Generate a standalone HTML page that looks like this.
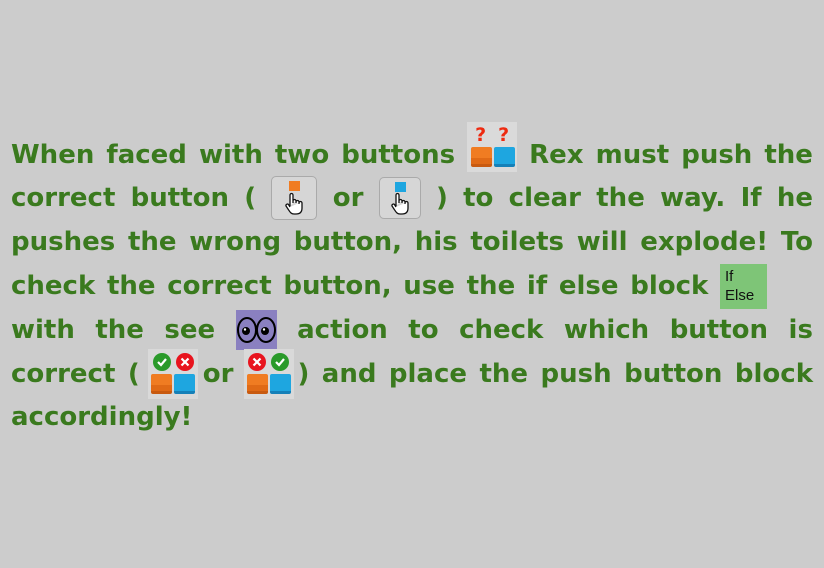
<!DOCTYPE html>
<html><head><meta charset="utf-8">
<style>
html,body{margin:0;padding:0;}
body{width:824px;height:568px;background:#cccccc;position:relative;overflow:hidden;
font-family:"DejaVu Sans","Liberation Sans",sans-serif;font-weight:bold;font-size:26px;color:#3a7a1e;}
.l{position:absolute;left:11px;width:802px;height:44px;display:flex;align-items:center;justify-content:space-between;white-space:nowrap;}
.l.last{justify-content:flex-start;}
.g{display:flex;align-items:center;}
.ic{display:inline-block;position:relative;flex:none;}
.sq{position:absolute;width:21px;height:20px;border-radius:2px;}
.o{background:#f07c22;border-bottom:3px solid #c85a10;box-sizing:border-box;box-shadow:inset 0 -6px 0 #e06a16;}
.b{background:#1ea6e0;border-bottom:3px solid #1580b8;box-sizing:border-box;}
</style></head><body>

<div class="l" style="top:133px">
<span>When</span><span>faced</span><span>with</span><span>two</span><span>buttons</span>
<span class="ic" style="width:50px;height:50px;background:#dadada;top:-8px;">
<span style="position:absolute;left:8px;top:2px;color:#ee2a10;font-size:19px;">?</span>
<span style="position:absolute;left:31px;top:2px;color:#ee2a10;font-size:19px;">?</span>
<span class="sq o" style="left:4px;top:25px"></span><span class="sq b" style="left:27px;top:25px"></span>
</span>
<span>Rex</span><span>must</span><span>push</span><span>the</span>
</div>

<div class="l" style="top:176px">
<span>correct</span><span>button</span><span>(</span>
<span class="ic" style="width:44px;height:42px;background:#d6d6d6;border:1px solid #aaa;border-radius:5px;">
<span style="position:absolute;left:17px;top:4px;width:11px;height:10px;background:#f07c22;"></span>
<svg style="position:absolute;left:12px;top:15px" width="22" height="24" viewBox="0 0 22 24"><path d="M6 14V3a1.5 1.5 0 0 1 3 0v8M9 9a1.5 1.5 0 0 1 3 0v2M12 10a1.5 1.5 0 0 1 3 0v2M15 11a1.5 1.5 0 0 1 3 0v5c0 4-2 6-6 6h-2c-3 0-4-2-6-5l-2-3a1.5 1.5 0 0 1 2.5-1.5L6 15" fill="#fff" stroke="#111" stroke-width="1.3"/></svg>
</span>
<span>or</span>
<span class="ic" style="width:40px;height:40px;background:#d6d6d6;border:1px solid #aaa;border-radius:5px;">
<span style="position:absolute;left:15px;top:4px;width:11px;height:10px;background:#1ea6e0;"></span>
<svg style="position:absolute;left:10px;top:14px" width="22" height="24" viewBox="0 0 22 24"><path d="M6 14V3a1.5 1.5 0 0 1 3 0v8M9 9a1.5 1.5 0 0 1 3 0v2M12 10a1.5 1.5 0 0 1 3 0v2M15 11a1.5 1.5 0 0 1 3 0v5c0 4-2 6-6 6h-2c-3 0-4-2-6-5l-2-3a1.5 1.5 0 0 1 2.5-1.5L6 15" fill="#fff" stroke="#111" stroke-width="1.3"/></svg>
</span>
<span>)</span><span>to</span><span>clear</span><span>the</span><span>way.</span><span>If</span><span>he</span>
</div>

<div class="l" style="top:220px">
<span>pushes</span><span>the</span><span>wrong</span><span>button,</span><span>his</span><span>toilets</span><span>will</span><span>explode!</span><span>To</span>
</div>

<div class="l" style="top:264px">
<span>check</span><span>the</span><span>correct</span><span>button,</span><span>use</span><span>the</span><span>if</span><span>else</span><span>block</span>
<span class="ic" style="width:47px;height:45px;background:#7ec577;margin-right:46px;font-family:'Liberation Sans',sans-serif;font-weight:normal;font-size:15px;color:#111;line-height:18px;">
<span style="position:absolute;left:5px;top:4px">If</span><span style="position:absolute;left:5px;top:23px">Else</span></span>
</div>

<div class="l" style="top:308px">
<span>with</span><span>the</span><span>see</span>
<span class="ic" style="width:41px;height:40px;background:#8a80c0;">
<svg width="41" height="40" viewBox="0 0 41 40"><ellipse cx="11" cy="20" rx="9" ry="12" fill="#8a80c0" stroke="#000" stroke-width="2"/><ellipse cx="30" cy="20" rx="9" ry="12" fill="#8a80c0" stroke="#000" stroke-width="2"/><circle cx="10" cy="21" r="4" fill="#000"/><circle cx="29" cy="21" r="4" fill="#000"/><circle cx="9" cy="19.5" r="1.2" fill="#fff"/><circle cx="28" cy="19.5" r="1.2" fill="#fff"/></svg></span>
<span>action</span><span>to</span><span>check</span><span>which</span><span>button</span><span>is</span>
</div>

<div class="l" style="top:352px">
<span>correct</span>
<span class="g"><span>(</span>
<span class="ic" style="width:50px;height:50px;background:#d9d9d9;margin-left:8px;">
<svg style="position:absolute;left:4px;top:3px" width="44" height="20"><circle cx="10" cy="10" r="9" fill="#2a9a2a"/><path d="M6 10l3 3 5-6" stroke="#fff" stroke-width="2.2" fill="none"/><circle cx="33" cy="10" r="9" fill="#e8141e"/><path d="M29.5 6.5l7 7M36.5 6.5l-7 7" stroke="#fff" stroke-width="2.2"/></svg>
<span class="sq o" style="left:3px;top:25px"></span><span class="sq b" style="left:26px;top:25px"></span>
</span>
<span style="margin-left:5px">or</span>
<span class="ic" style="width:50px;height:50px;background:#d9d9d9;margin-left:11px;">
<svg style="position:absolute;left:3px;top:3px" width="44" height="20"><circle cx="10" cy="10" r="9" fill="#e8141e"/><path d="M6.5 6.5l7 7M13.5 6.5l-7 7" stroke="#fff" stroke-width="2.2"/><circle cx="33" cy="10" r="9" fill="#2a9a2a"/><path d="M29 10l3 3 5-6" stroke="#fff" stroke-width="2.2" fill="none"/></svg>
<span class="sq o" style="left:3px;top:25px"></span><span class="sq b" style="left:26px;top:25px"></span>
</span>
<span style="margin-left:3px">)</span></span>
<span>and</span><span>place</span><span>the</span><span>push</span><span>button</span><span>block</span>
</div>

<div class="l last" style="top:395px"><span>accordingly!</span></div>

</body></html>
